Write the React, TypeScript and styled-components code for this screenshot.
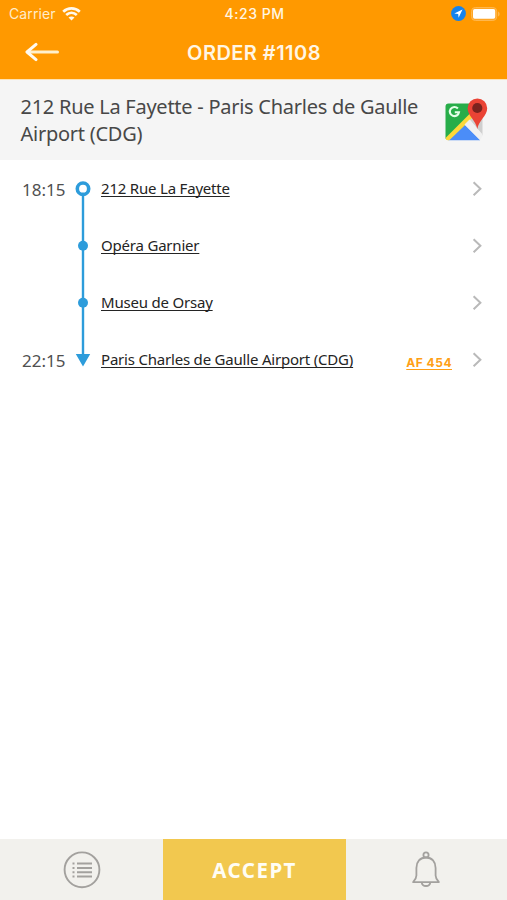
import React from 'react';
import styled, { createGlobalStyle } from 'styled-components';

const GlobalStyle = createGlobalStyle`
  *, *::before, *::after { box-sizing: border-box; }
  body { margin: 0; background: #fff; }
`;

const Screen = styled.div`
  display: flex;
  flex-direction: column;
  width: 507px;
  height: 900px;
  overflow: hidden;
  background: #fff;
  font-family: 'Noto Sans', sans-serif;
`;

const Header = styled.header`
  height: 80px;
  flex: none;
  background: #ff9900;
  border-bottom: 1px solid #ffe3b3;
  color: #fff6e4;
  font-family: Inter, sans-serif;
`;

const StatusBar = styled.div`
  display: grid;
  grid-template-columns: 1fr auto 1fr;
  align-items: center;
  height: 27px;
  padding: 0 7px 0 9px;
`;

const Carrier = styled.div`
  display: flex;
  align-items: center;
  gap: 6px;
  font-size: 14px;
  line-height: 27px;
  letter-spacing: 0.1px;
  color: #ffecca;
`;

const Clock = styled.div`
  padding-top: 1px;
  font-size: 14px;
  font-weight: 500;
  line-height: 26px;
  letter-spacing: 0.5px;
`;

const Indicators = styled.div`
  display: flex;
  justify-content: flex-end;
  align-items: center;
  gap: 5px;
`;

const NavBar = styled.div`
  display: grid;
  grid-template-columns: 60px 1fr 59px;
  align-items: center;
  height: 52px;
`;

const BackButton = styled.button`
  display: flex;
  padding: 0 0 2px 25px;
  border: 0;
  background: none;
`;

const Title = styled.h1`
  margin: 0;
  padding-bottom: 1px;
  text-align: center;
  font-size: 20px;
  line-height: 24px;
  font-weight: 600;
  letter-spacing: 0.45px;
`;

const Summary = styled.section`
  display: flex;
  justify-content: space-between;
  height: 80px;
  flex: none;
  padding: 14px 19px 0 20.5px;
  background: #f5f5f5;
`;

const Route = styled.p`
  width: 410px;
  margin: 0;
  color: #484848;
  font-size: 20px;
  line-height: 26.5px;
  letter-spacing: -0.26px;
`;

const MapLink = styled.span`
  display: flex;
  padding-top: 3px;
`;

const Stops = styled.ul`
  flex: 1;
  margin: 0;
  padding: 0;
  list-style: none;
`;

const Stop = styled.li`
  display: grid;
  grid-template-columns: 53px 16px 1fr auto 10px;
  height: 57px;
  padding: 0 25px 0 22px;
  align-items: center;
`;

const Time = styled.span`
  color: #505050;
  font-size: 17px;
  line-height: 24px;
  padding-top: 2px;
`;

const Place = styled.span`
  padding: 0 0 2px 10px;
  color: #242424;
  font-size: 15px;
  line-height: 20px;
  letter-spacing: -0.2px;
  white-space: nowrap;
  text-decoration: underline;
  text-decoration-thickness: 1px;
  text-underline-offset: 2px;
  text-decoration-skip-ink: none;
`;

const Flight = styled.span`
  margin-right: 20px;
  padding-top: 7px;
  color: #ff9f16;
  font-family: Inter, sans-serif;
  font-size: 12px;
  line-height: 16px;
  font-weight: 700;
  letter-spacing: 0.5px;
  text-decoration: underline;
  text-decoration-thickness: 1px;
  text-underline-offset: 2px;
`;

const Footer = styled.footer`
  display: grid;
  grid-template-columns: 163.4px 182.4px 161.2px;
  height: 61px;
  flex: none;
  background: #f2f1ed;
`;

const Tab = styled.button`
  display: flex;
  align-items: center;
  justify-content: center;
  padding: 0;
  border: 0;
  background: none;
`;

const Accept = styled.button`
  padding: 1px 0 0;
  border: 0;
  background: #f2c84f;
  color: #fffdf4;
  font-family: 'Noto Sans', sans-serif;
  font-size: 20.5px;
  font-weight: 700;
  letter-spacing: 1.5px;
`;

type Kind = 'start' | 'middle' | 'end';

const Rail = ({ kind }: { kind: Kind }) => (
  <svg width="16" height="57" viewBox="0 0 16 57" fill="#2d9cdb">
    {kind === 'start' && (
      <>
        <path d="M6.8 34h2.4v23H6.8z" />
        <circle cx="8" cy="28.7" r="5.7" fill="#fff" stroke="#2d9cdb" strokeWidth="3.6" />
      </>
    )}
    {kind === 'middle' && (
      <>
        <path d="M6.8 0h2.4v57H6.8z" />
        <circle cx="8" cy="28.7" r="5" />
      </>
    )}
    {kind === 'end' && <path d="M6.8 0h2.4v23h6L8 35.5 .8 23h6z" />}
  </svg>
);

const Chevron = () => (
  <svg width="10" height="16" viewBox="0 0 10 16" fill="none" stroke="#b9b9b9" strokeWidth="2">
    <path d="M1.6 1.2 8.4 7.7l-6.8 6.5" />
  </svg>
);

const WifiIcon = () => (
  <svg width="19" height="14" viewBox="0 0 19 14" fill="none" stroke="#fff9ee" strokeWidth="2.7">
    <path d="M1.2 4.7c4.8-4.4 11.8-4.4 16.6 0M4.2 8.1c3.1-2.9 7.5-2.9 10.6 0" />
    <path d="M9.5 13.4 6.5 10.6c1.7-1.6 4.3-1.6 6 0z" fill="#fff9ee" stroke="none" />
  </svg>
);

const LocationIcon = () => (
  <svg width="15" height="15" viewBox="0 0 15 15">
    <circle cx="7.5" cy="7.5" r="7.4" fill="#1583ed" />
    <path d="M11.5 3.5 3.3 7.4l3.9.5.4 3.9z" fill="#fff" />
  </svg>
);

const BatteryIcon = () => (
  <svg width="29" height="14" viewBox="0 0 29 14">
    <rect x=".5" y=".5" width="25.2" height="13" rx="3.8" fill="#ffa626" stroke="#ffb74d" />
    <rect x="2" y="2" width="22.2" height="9.8" rx="1.7" fill="#fff" />
    <path d="M27 4.5c2.2 1 2.2 4 0 5z" fill="#ffb74d" />
  </svg>
);

const BackIcon = () => (
  <svg width="35" height="20" viewBox="0 0 35 20" fill="none" strokeWidth="3" strokeLinecap="round" strokeLinejoin="round">
    <path d="M3 10h29.5" stroke="#fff0cc" />
    <path d="M11 2.4 2 10l9 7.6" stroke="#fffaf0" />
  </svg>
);

const MapIcon = () => (
  <svg width="44" height="44" viewBox="0 0 44 44">
    <defs>
      <clipPath id="map-tile">
        <path d="M4.5 6.5H32L38.5 18v21L36 43.5H4.5a3 3 0 0 1-3-3v-31a3 3 0 0 1 3-3z" />
      </clipPath>
    </defs>
    <g clipPath="url(#map-tile)">
      <path d="M1 6h31v10L1 43.5z" fill="#27ad49" />
      <path d="m20.5 27.5 16 16H4z" fill="#4b8df8" />
      <path d="M1 41.5 26 16.5l3 4L5 43.5H1z" fill="#fdd83a" />
      <path d="M26 23l5-5h8v21z" fill="#cfcfcf" />
      <path d="m20.5 27.5 5-5L39 38v5.5h-2.5z" fill="#f0f0f0" />
    </g>
    <path
      d="M13.9 11.5a4.6 4.6 0 1 0 1.1 3.7h-4.2"
      fill="none"
      stroke="#e5ffe9"
      strokeWidth="2.1"
    />
    <path d="M33.3 32C32 23.2 23.6 19 23.6 11.2a9.8 9.8 0 0 1 19.6 0C43.2 19 34.6 23.2 33.3 32z" fill="#ea4335" />
    <circle cx="33.3" cy="11" r="5.1" fill="#7b231e" />
  </svg>
);

const ListIcon = () => (
  <svg width="38" height="38" viewBox="0 0 38 38" fill="none" stroke="#a3a19e">
    <circle cx="19" cy="18.8" r="17.4" strokeWidth="1.9" />
    <path d="M9.5 12.6h2M9.5 17h2M9.5 21.2h2M9.5 25.5h2M14 12.6h15M14 17h15M14 21.2h15M14 25.5h15" strokeWidth="2" />
  </svg>
);

const BellIcon = () => (
  <svg width="30" height="38" viewBox="0 0 30 38" fill="none" stroke="#a3a19e" strokeWidth="1.8" strokeLinejoin="round">
    <circle cx="15" cy="3.9" r="2.6" />
    <path d="M15 6.5C9 6.5 5.4 10.9 5.4 16.9v7.5c0 2.8-1 4.3-3.3 6.7h25.8c-2.3-2.4-3.3-3.9-3.3-6.7v-7.5C24.6 10.9 21 6.5 15 6.5z" />
    <path d="M10.7 31.3c.3 2.3 2 3.7 4.3 3.7s4-1.4 4.3-3.7" />
  </svg>
);

const stops: { time?: string; place: string; kind: Kind; flight?: string }[] = [
  { time: '18:15', place: '212 Rue La Fayette', kind: 'start' },
  { place: 'Opéra Garnier', kind: 'middle' },
  { place: 'Museu de Orsay', kind: 'middle' },
  { time: '22:15', place: 'Paris Charles de Gaulle Airport (CDG)', kind: 'end', flight: 'AF 454' },
];

export default function App() {
  return (
    <>
      <GlobalStyle />
      <Screen>
        <Header>
          <StatusBar>
            <Carrier>
              Carrier
              <WifiIcon />
            </Carrier>
            <Clock>4:23 PM</Clock>
            <Indicators>
              <LocationIcon />
              <BatteryIcon />
            </Indicators>
          </StatusBar>
          <NavBar>
            <BackButton aria-label="Back">
              <BackIcon />
            </BackButton>
            <Title>ORDER #1108</Title>
          </NavBar>
        </Header>
        <Summary>
          <Route>212 Rue La Fayette - Paris Charles de Gaulle Airport (CDG)</Route>
          <MapLink>
            <MapIcon />
          </MapLink>
        </Summary>
        <Stops>
          {stops.map((stop) => (
            <Stop key={stop.place}>
              <Time>{stop.time}</Time>
              <Rail kind={stop.kind} />
              <Place>{stop.place}</Place>
              {stop.flight ? <Flight>{stop.flight}</Flight> : <span />}
              <Chevron />
            </Stop>
          ))}
        </Stops>
        <Footer>
          <Tab aria-label="Orders">
            <ListIcon />
          </Tab>
          <Accept>ACCEPT</Accept>
          <Tab aria-label="Notifications">
            <BellIcon />
          </Tab>
        </Footer>
      </Screen>
    </>
  );
}
